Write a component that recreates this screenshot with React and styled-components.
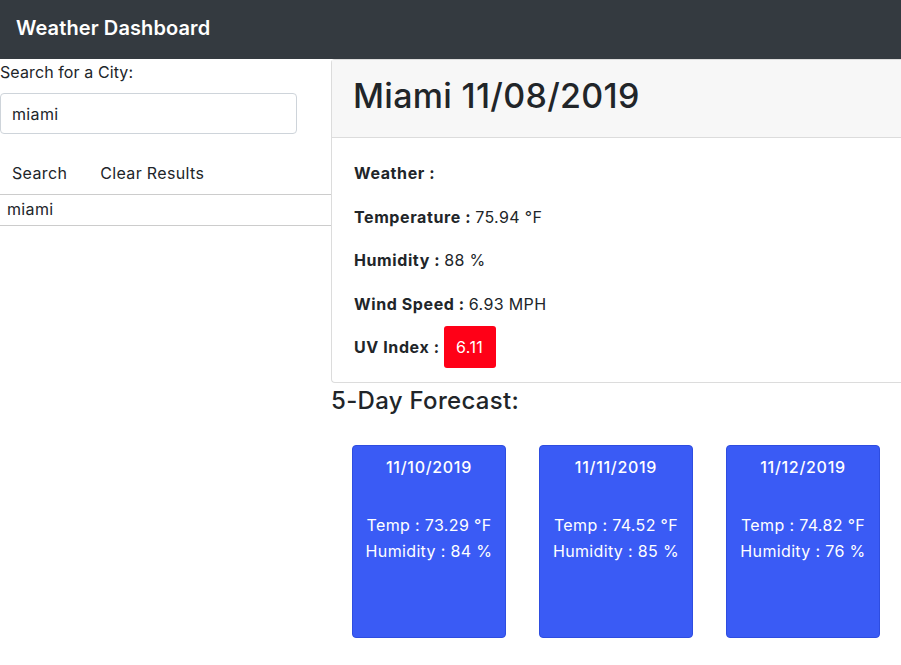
import React from 'react';
import styled, { createGlobalStyle } from 'styled-components';

const GlobalStyle = createGlobalStyle`
  body { margin: 0; font-family: Inter, "Helvetica Neue", Arial, sans-serif; color: #212529; background: #fff; letter-spacing: 0.35px; }
  * { box-sizing: border-box; }
`;

const Navbar = styled.nav` height: 59px; background: #343a40; display: flex; align-items: center; padding: 0 16px 4px; `;
const Brand = styled.span` color: #fff; font-size: 20px; font-weight: 600; letter-spacing: 0.1px; `;
const Layout = styled.div` display: grid; grid-template-columns: 331px 1fr; `;
const Sidebar = styled.aside` display: flex; flex-direction: column; `;
const Label = styled.label` font-size: 16px; line-height: 24px; padding-top: 1px; letter-spacing: 0.1px; `;
const Input = styled.input` width: 297px; height: 41px; margin-top: 9px; border: 1px solid #ced4da; border-radius: 4px; padding: 0 11px; font: inherit; font-size: 16px; letter-spacing: 0.35px; color: #212529; `;
const ButtonRow = styled.div` display: flex; margin-top: 21px; `;
const PlainButton = styled.button` background: none; border: none; font: inherit; font-size: 16px; letter-spacing: 0.35px; color: #212529; padding: 6px 12px; margin-right: ${({ $gap }) => $gap || 0}px; line-height: 24px; `;
const HistoryList = styled.ul` list-style: none; margin: 3px 0 0; padding: 0; `;
const HistoryItem = styled.li` border-top: 1px solid #ccc; border-bottom: 1px solid #ccc; padding: 3px 7px 5px; font-size: 16px; line-height: 22px; `;

const Main = styled.main` display: flex; flex-direction: column; `;
const Card = styled.section` border: 1px solid #dcdcdc; border-right: none; border-radius: 4px 0 0 4px; `;
const CardHeader = styled.header` background: #f7f7f7; border-bottom: 1px solid #dcdcdc; height: 78px; display: flex; align-items: center; padding: 0 21px 7px; `;
const CityTitle = styled.h1` margin: 0; font-size: 34px; font-weight: 500; letter-spacing: 0.3px; `;
const CardBody = styled.div` padding: 23px 22px 23px; display: flex; flex-direction: column; gap: 19.5px; `;
const Stat = styled.p` margin: 0; height: 24px; font-size: 16px; line-height: 24px; display: flex; align-items: center; gap: 4px; `;
const StatLabel = styled.strong` font-weight: 700; letter-spacing: 0.6px; `;
const UvBadge = styled.span` background: #ff0017; color: #fff; border-radius: 3px; width: 52px; height: 42px; flex-shrink: 0; display: inline-flex; align-items: center; justify-content: center; `;
const ForecastTitle = styled.h2` margin: 3px 0 0; font-size: 24px; font-weight: 500; line-height: 30px; letter-spacing: 0.3px; `;
const ForecastRow = styled.div` display: flex; gap: 33px; padding: 29px 0 0 21px; `;
const DayCard = styled.div` width: 154px; height: 193px; background: #3a5bf5; border: 1px solid #2e4de0; border-radius: 4px; color: #fff; text-align: center; padding-top: 8px; font-size: 16px; line-height: 26px; `;
const DayDate = styled.div` font-weight: 500; letter-spacing: 0.7px; margin-bottom: 32px; `;

const forecast = [
    { date: '11/10/2019', temp: '73.29', humidity: 84 },
    { date: '11/11/2019', temp: '74.52', humidity: 85 },
    { date: '11/12/2019', temp: '74.82', humidity: 76 },
];

const App = () => (
    <>
        <GlobalStyle />
        <Navbar><Brand>Weather Dashboard</Brand></Navbar>
        <Layout>
            <Sidebar>
                <Label htmlFor="city">Search for a City:</Label>
                <Input id="city" defaultValue="miami" />
                <ButtonRow>
                    <PlainButton $gap={9}>Search</PlainButton>
                    <PlainButton>Clear Results</PlainButton>
                </ButtonRow>
                <HistoryList><HistoryItem>miami</HistoryItem></HistoryList>
            </Sidebar>
            <Main>
                <Card>
                    <CardHeader><CityTitle>Miami 11/08/2019</CityTitle></CardHeader>
                    <CardBody>
                        <Stat><StatLabel>Weather :</StatLabel></Stat>
                        <Stat><StatLabel>Temperature :</StatLabel> 75.94 °F</Stat>
                        <Stat><StatLabel>Humidity :</StatLabel> 88 %</Stat>
                        <Stat><StatLabel>Wind Speed :</StatLabel> 6.93 MPH</Stat>
                        <Stat><StatLabel>UV Index :</StatLabel><UvBadge>6.11</UvBadge></Stat>
                    </CardBody>
                </Card>
                <ForecastTitle>5-Day Forecast:</ForecastTitle>
                <ForecastRow>
                    {forecast.map((day) => (
                        <DayCard key={day.date}>
                            <DayDate>{day.date}</DayDate>
                            <div>Temp : {day.temp} °F</div>
                            <div>Humidity : {day.humidity} %</div>
                        </DayCard>
                    ))}
                </ForecastRow>
            </Main>
        </Layout>
    </>
);

export default App;
